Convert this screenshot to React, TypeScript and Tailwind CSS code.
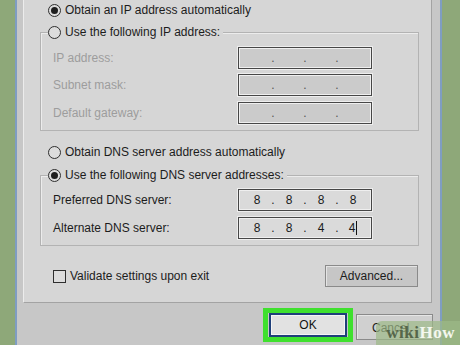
import React from "react";

const font = { fontFamily: '"Liberation Sans", Arial, sans-serif' };

function Radio({ checked }: { checked?: boolean }) {
  return (
    <div className="w-[13px] h-[13px] rounded-full border-[1.5px] border-[#2e2e2e] bg-[#dcdcdc] flex items-center justify-center shrink-0">
      {checked && <div className="w-[7px] h-[7px] rounded-full bg-[#1e1e1e]" />}
    </div>
  );
}

function IpField({ values, enabled, cursor }: { values: string[]; enabled?: boolean; cursor?: boolean }) {
  return (
    <div
      className={`w-[134px] h-[22px] border border-[#474747] shadow-[inset_0_0_0_1px_#efefef,0_0_0_1px_#eeeeee] flex items-center pl-[4px] ${
        enabled ? "bg-[#dadada] text-[#1a1a1a]" : "bg-[#cbcbcb] text-[#555]"
      }`}
    >
      {[0, 1, 2, 3].map((i) => (
        <React.Fragment key={i}>
          <div className="w-[28px] text-center text-[12px] leading-none flex items-center justify-center">
            {values[i]}
            {cursor && i === 3 && <span className="inline-block w-[1px] h-[14px] bg-[#111] ml-[1px]" />}
          </div>
          {i < 3 && <div className="w-[4px] text-center text-[12px] leading-none">.</div>}
        </React.Fragment>
      ))}
    </div>
  );
}

function FieldRow({ label, disabled, children, className }: { label: string; disabled?: boolean; children: React.ReactNode; className?: string }) {
  return (
    <div className={`flex items-center h-[22px] ${className ?? ""}`}>
      <div className={`w-[197px] pl-[12px] text-[12px] ${disabled ? "text-[#9d9d9d]" : "text-[#1c1c1c]"}`}>{label}</div>
      {children}
    </div>
  );
}

export default function App() {
  return (
    <div className="w-[460px] h-[345px] bg-[#8ea879] flex overflow-hidden relative" style={font}>
      <div className="w-[15px] shrink-0" />
      <div className="w-[427px] shrink-0 h-full border-x-2 border-[#7f9dc2] bg-[#c7c7c7] flex flex-col">
        {/* tab panel */}
        <div className="ml-[6px] w-[409px] h-[303px] bg-[#d6d6d6] border-l border-l-[#ececec] border-r border-b border-r-[#a3a3a3] border-b-[#a3a3a3] flex flex-col pt-[3px] text-[#1c1c1c]">
          <div className="h-[14px] flex items-center gap-[4px] ml-[24px] text-[12px]">
            <Radio checked />
            <span>Obtain an IP address automatically</span>
          </div>

          {/* group 1 */}
          <div className="mt-[15px] ml-[16px] w-[379px] border border-[#b3b3b3] shadow-[inset_1px_1px_0_#ececec] flex flex-col pb-[6px]">
            <div className="-mt-[8px] ml-[7px] h-[14px] w-fit pr-[3px] bg-[#d6d6d6] flex items-center gap-[4px] text-[12px]">
              <Radio />
              <span>Use the following IP address:</span>
            </div>
            <FieldRow label="IP address:" disabled className="mt-[8px]">
              <IpField values={["", "", "", ""]} />
            </FieldRow>
            <FieldRow label="Subnet mask:" disabled className="mt-[5px]">
              <IpField values={["", "", "", ""]} />
            </FieldRow>
            <FieldRow label="Default gateway:" disabled className="mt-[6px]">
              <IpField values={["", "", "", ""]} />
            </FieldRow>
          </div>

          <div className="mt-[14px] h-[14px] flex items-center gap-[4px] ml-[24px] text-[12px]">
            <Radio />
            <span>Obtain DNS server address automatically</span>
          </div>

          {/* group 2 */}
          <div className="mt-[16px] ml-[16px] w-[379px] border border-[#b3b3b3] shadow-[inset_1px_1px_0_#ececec] flex flex-col pb-[6px]">
            <div className="-mt-[8px] ml-[7px] h-[14px] w-fit pr-[3px] bg-[#d6d6d6] flex items-center gap-[4px] text-[12px]">
              <Radio checked />
              <span>Use the following DNS server addresses:</span>
            </div>
            <FieldRow label="Preferred DNS server:" className="mt-[7px]">
              <IpField values={["8", "8", "8", "8"]} enabled />
            </FieldRow>
            <FieldRow label="Alternate DNS server:" className="mt-[6px]">
              <IpField values={["8", "8", "4", "4"]} enabled cursor />
            </FieldRow>
          </div>

          <div className="mt-[19px] ml-[16px] w-[379px] h-[22px] flex items-center justify-between">
            <div className="flex items-center gap-[4px] ml-[13px] text-[12px]">
              <div className="w-[13px] h-[13px] border-[1.5px] border-[#2e2e2e] bg-[#dcdcdc]" />
              <span>Validate settings upon exit</span>
            </div>
            <div className="w-[93px] h-[22px] mr-[1px] border border-[#8a8a8a] bg-[#c6c6c6] shadow-[inset_1px_1px_0_#e4e4e4] flex items-center justify-center text-[12px]">
              Advanced...
            </div>
          </div>
        </div>

        {/* bottom buttons */}
        <div className="flex mt-[5px] ml-[246px]">
          <div className="w-[90px] h-[34px] border-[5px] border-[#3fe02e] px-[1px]">
            <div className="w-full h-full border-2 border-[#1f3f7a] bg-[#e2e2e2] shadow-[inset_0_0_0_1px_#f5f5f5] flex items-center justify-center text-[12px] text-[#111]">
              OK
            </div>
          </div>
          <div className="ml-[3px] mt-[6px] w-[77px] h-[26px] border border-[#8a8a8a] bg-[#d0d0d0] shadow-[inset_1px_1px_0_#e6e6e6] flex items-start pt-[4px] pl-[15px] text-[12px] text-[#222]">
            Cancel
          </div>
        </div>
      </div>

      {/* wikiHow watermark */}
      <div className="absolute right-0 bottom-0 w-[84px] h-[24px] bg-[#9db987]/70 rounded-tl-[6px]" />
      <div
        className="absolute right-[5px] bottom-[4px] text-[17px] font-bold leading-none tracking-[0.5px]"
        style={{ fontFamily: '"Liberation Serif", "Times New Roman", serif' }}
      >
        <span className="text-[#56664a]">wiki</span>
        <span className="text-[#f4f7ef]">How</span>
      </div>
    </div>
  );
}
